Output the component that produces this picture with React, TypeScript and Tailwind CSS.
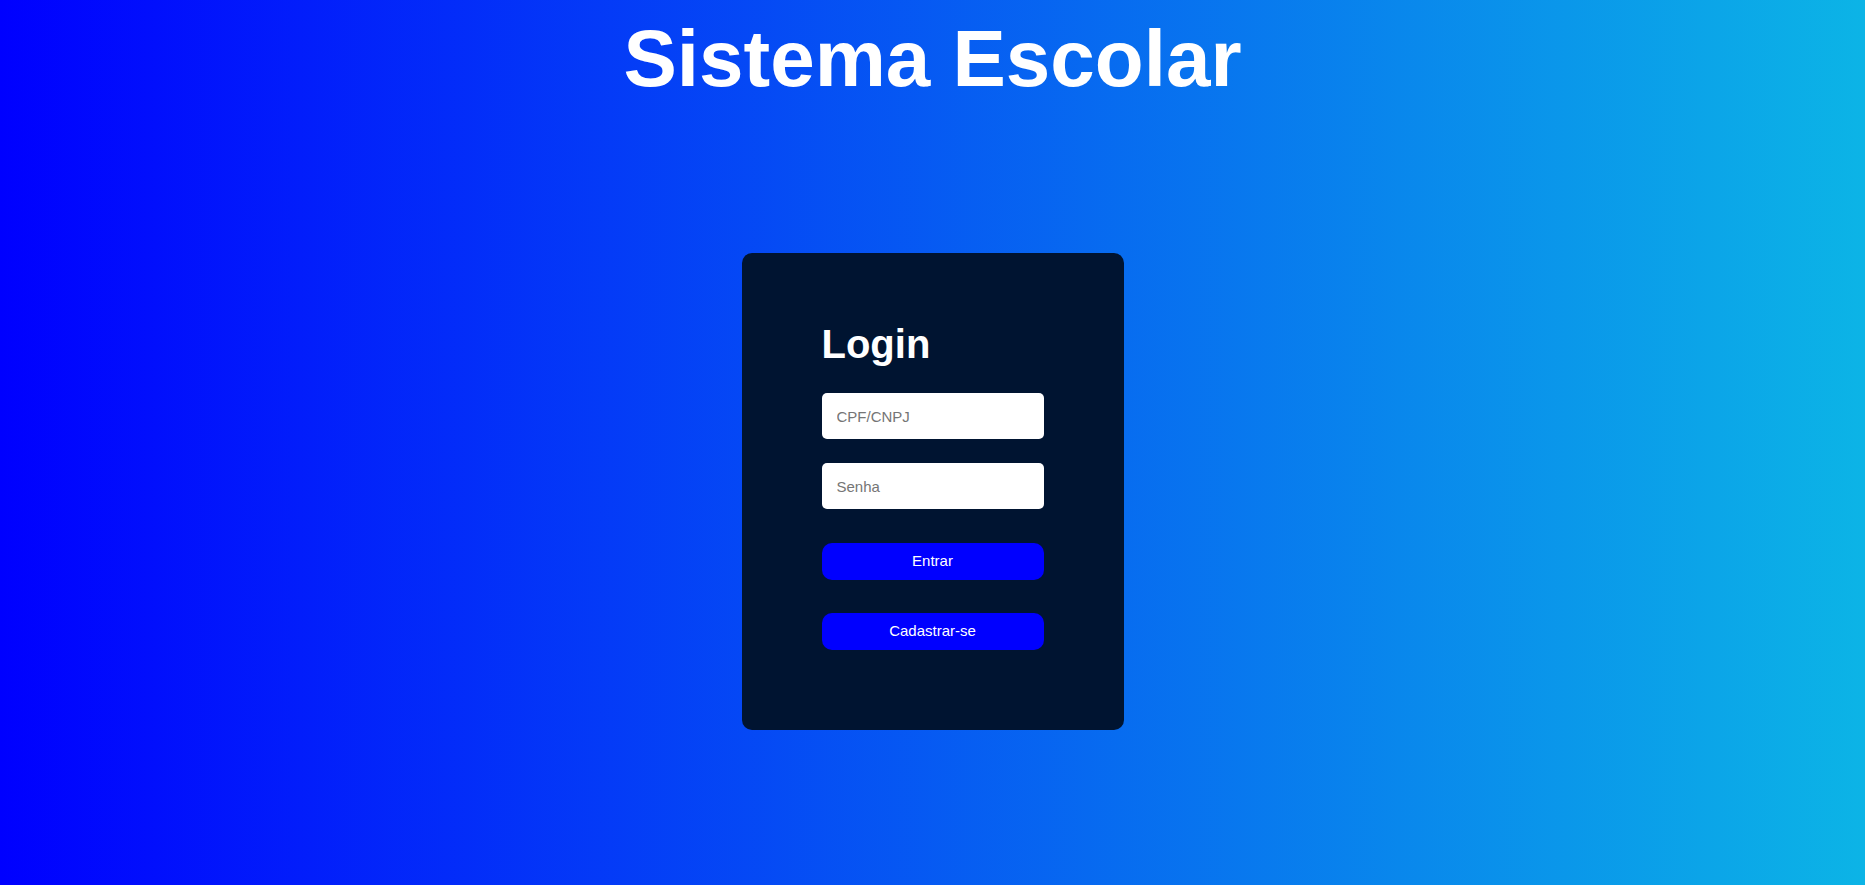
const App = () => {
    return (
        <div className="min-h-screen w-full flex flex-col items-center bg-[linear-gradient(to_right,#0000ff,#0cb4e6)] font-['Liberation_Sans',Arial,sans-serif]">
            <h1 className="mt-[13px] text-[80px] font-bold text-white leading-[92px]">Sistema Escolar</h1>
            <div className="mt-[148px] w-[382px] h-[477px] rounded-[10px] bg-[#001431] px-[80px] pt-[68px] flex flex-col">
                <h2 className="text-[40px] font-bold text-white leading-[46px]">Login</h2>
                <input
                    type="text"
                    placeholder="CPF/CNPJ"
                    className="mt-[26px] h-[46px] w-full rounded-[5px] bg-white px-[15px] text-[15px] text-black placeholder:text-[#757575] outline-none"
                />
                <input
                    type="password"
                    placeholder="Senha"
                    className="mt-[24px] h-[46px] w-full rounded-[5px] bg-white px-[15px] text-[15px] text-black placeholder:text-[#757575] outline-none"
                />
                <button className="mt-[34px] h-[37px] w-full rounded-[10px] bg-[#0000ff] text-[15px] text-white">Entrar</button>
                <button className="mt-[33px] h-[37px] w-full rounded-[10px] bg-[#0000ff] text-[15px] text-white">Cadastrar-se</button>
            </div>
        </div>
    )
}

export default App
